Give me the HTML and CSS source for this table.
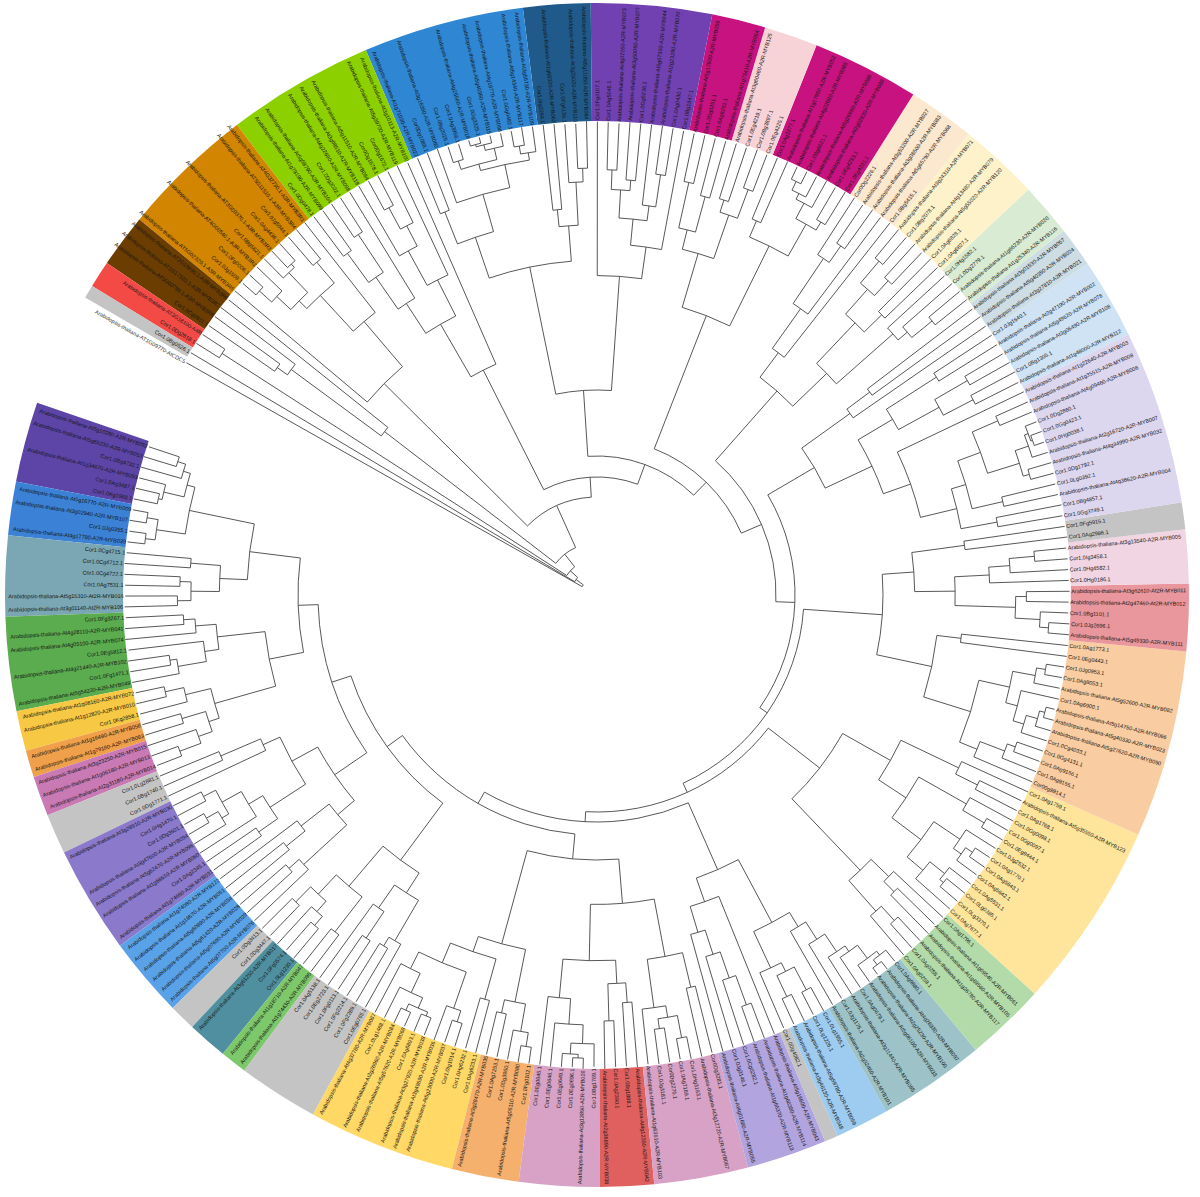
FILE: index.html
```html
<!DOCTYPE html>
<html lang="en">
<head>
<meta charset="utf-8">
<title>MYB phylogenetic tree</title>
<link rel="stylesheet" href="styles.css">
</head>
<body>
<main class="page">
  <svg id="tree" class="tree" width="1200" height="1197" viewBox="0 0 1200 1197" xmlns="http://www.w3.org/2000/svg">
    <g id="bands"></g>
    <g id="branches" class="branches"></g>
    <g id="labels" class="labels"></g>
  </svg>
</main>
<script src="script.js"></script>
</body>
</html>
```
FILE: styles.css
```css
html, body {
  margin: 0;
  padding: 0;
  background: #ffffff;
}
.page {
  width: 1200px;
  height: 1197px;
  overflow: hidden;
}
.tree {
  display: block;
}
.branches path,
.branches line {
  stroke: #3a3a3a;
  stroke-width: 0.85;
  fill: none;
}
.labels text {
  font-family: "Liberation Sans", Arial, sans-serif;
  font-size: 5.5px;
  fill: #161616;
}
.labels text.outgroup {
  fill: #333333;
}
```
FILE: script.js
```js
(function () {
  var CX = 597, CY = 595, TIP = 474, RIN = 474, ROUT = 592;
  var AP = 'Arabidopsis-thaliana-';
  var G = '#c4c4c4';
  var ranges = [
    ['#5d45a8', ['A:At5g10280-A2R-MYB092','A:At5g65230-A2R-MYB053','Cor1.0Bg4732.1','A:At1g34670-A2R-MYB093','Cor1.0Ag3487.1','Cor1.0Kg1968.1']],
    ['#3b82d6', ['A:At5g16770-A2R-MYB009','A:At3g02940-A2R-MYB107','Cor1.0Jg0355.1','A:At4g17780-A2R-MYB039']],
    ['#7aa7b3', ['Cor1.0Cg4715.1','Cor1.0Cg4712.1','Cor1.0Cg4722.1','Cor1.0Ag7531.1','A:At5g15310-At2R-MYB016','A:At3g01140-At2R-MYB106']],
    ['#5bab4f', ['Cor1.0Fg3267.1','A:At4g28110-A2R-MYB041','A:At4g05100-A2R-MYB074','Cor1.0Eg5812.1','A:At4g21440-A2R-MYB102','Cor1.0Fg1471.1','A:At5g54230-A2R-MYB049']],
    ['#f7c843', ['A:At1g08160-A2R-MYB072','A:At1g12820-A2R-MYB010','Cor1.0Kg2858.1']],
    ['#f0a04a', ['A:At1g16490-A2R-MYB058','A:At1g79180-A2R-MYB063']],
    ['#c97ab5', ['A:At3g23250-A2R-MYB015','A:At1g06180-A2R-MYB013','A:At2g31180-A2R-MYB014']],
    [G, ['Cor1.0Lg2881.1','Cor1.0Bg1740.1','Cor1.0Dg1771.1']],
    ['#8b79cc', ['A:At3g28910-A2R-MYB030','Cor1.0Hg1470.1','Cor1.0Dg3501.1','A:At3g47600-A2R-MYB094','A:At5g62470-A2R-MYB096','A:At1g68610-A2R-MYB060','Cor1.0Ag2345.1','A:At1g74650-A2R-MYB031']],
    ['#5aa2e8', ['A:At1g74080-A2R-MYB122','A:At1g18570-A2R-MYB051','A:At5g60890-A2R-MYB034','A:At5g61420-A2R-MYB028','A:At5g07690-A2R-MYB029','A:At5g07700-A2R-MYB076']],
    [G, ['Cor1.0Dg3413.1','Cor1.0Dg3447.1']],
    ['#4f8f9f', ['A:At3g61250-A2R-MYB017','Cor1.0Fg0574.1','Cor1.0Lg1230.1']],
    ['#7ec86c', ['A:At1g18710-A2R-MYB047','A:At1g74430-A2R-MYB095']],
    [G, ['Cor1.0Ag5138.1','Cor1.0Eg2723.1','Cor1.0Fg0113.1','Cor1.0Fg2214.1','Cor1.0Fg2289.1','Cor1.0Eg0765.1']],
    ['#ffd866', ['A:At4g37780-A2R-MYB087','Cor1.0Lg1468.1','A:At2g26960-A2R-MYB084','A:At5g57620-A2R-MYB068','Cor1.0Ag6893.1','A:At3g27920-A2R-MYB038','A:At3g49690-A2R-MYB036','A:At5g23000-A2R-MYB037','Cor1.0Ig1014.1','Cor1.0Hg6232.1','Cor1.0Ag6233.1']],
    ['#f5b06e', ['A:At3g28470-A2R-MYB035','Cor1.0Ag7253.1','Cor1.0Dg3960.1','A:At5g06110-A2R-MYB080','Cor1.0Fg0102.1']],
    ['#d7a2c6', ['Cor1.0Eg0645.1','Cor1.0Eg0646.1','Cor1.0Eg0649.1','Cor1.0Eg0696.1','A:At3g13890-A2R-MYB026','Cor1.0Bg1769.1']],
    ['#e0605f', ['A:At2g36890-A2R-MYB038','Cor1.0Ag2390.1','Cor1.0Bg1888.1','A:At4g12350-A2R-MYB042']],
    ['#d7a2c6', ['A:At1g63910-A2R-MYB103','Cor1.0Jg3181.1','Cor0Dg2270.1','Cor1.0Ag7169.1','Cor1.0Hg3163.1','A:At3g12720-A2R-MYB067','Cor0Dg3281.1']],
    ['#b2a4de', ['A:At4g01680-A2R-MYB055','Cor1.0Jg3146.1','Cor1.0Cg0282.1','A:At1g66370-A2R-MYB113','A:At1g66380-A2R-MYB114','A:At5g16600-A2R-MYB043']],
    [G, ['Cor1.0Dg4082.1']],
    ['#9ecbf0', ['A:At3g46130-A2R-MYB048','A:At5g59780-A2R-MYB059','Cor1.0Lg1226.1','Cor1.0Lg1955.1']],
    ['#9dc3c8', ['A:At2g32460-A2R-MYB101','Cor1.0Jg1175.1','A:At3g11440-A2R-MYB065','Cor1.0Ag0679.1','A:At5g06100-A2R-MYB033','A:At2g25230-A2R-MYB100','A:At4g26930-A2R-MYB097','Cor1.0Ag9880.1']],
    ['#b2dba9', ['Cor1.0Ag0259.1','Cor1.0Ag0258.1','A:At1g26780-A2R-MYB117','A:At1g69560-A2R-MYB105','A:At1g09540-A2R-MYB061','Cor1.0Ag1796.1']],
    ['#fee59b', ['Cor1.0Ag7677.1','Cor1.0Lg3370.1','Cor1.0Lg0385.1','Cor1.0Ag5531.1','Cor1.0Ag5642.1','Cor1.0Ag5643.1','Cor1.0Ag1770.1','Cor1.0Jg2532.1','Cor1.0Eg9444.1','Cor1.0Gg0097.1','Cor1.0Gg0098.1','Cor1.0Ag1768.1','A:At5g35550-A2R-MYB123','Cor1.0Ag1759.1']],
    ['#f9cda1', ['Cor00g9914.1','Cor1.0Ag9155.1','Cor1.0Ag9156.1','Cor1.0Gg4131.1','Cor1.0Cg4033.1','A:At5g27620-A2R-MYB090','A:At5g40330-A2R-MYB023','A:At5g14750-A2R-MYB066','Cor1.0Ag6900.1','A:At5g52600-A2R-MYB082','Cor1.0Ag8053.1','Cor1.0Jg0953.1','Cor1.0Eg0443.1','Cor1.0Ag1773.1']],
    ['#e9969d', ['A:At5g49330-A2R-MYB111','Cor1.0Jg2696.1','Cor1.0Bg1101.1','A:At2g47460-At2R-MYB012','A:At3g62610-At2R-MYB011']],
    ['#f2d5e2', ['Cor1.0Hg0186.1','Cor1.0Hg4582.1','Cor1.0Ig3458.1','A:At3g13540-A2R-MYB005']],
    [G, ['Cor1.0Ag2986.1','Cor1.0Fg5915.1']],
    ['#ddd6ef', ['Cor1.0Gg3749.1','Cor1.0Bg4857.1','A:At4g38620-A2R-MYB004','Cor1.0Lg0392.1','Cor1.0Dg1792.1','A:At4g34990-A2R-MYB032','A:At2g16720-A2R-MYB007','Cor1.0Hg0038.1','Cor1.0Gg0423.1','Cor1.0Dg2860.1','A:At4g09460-A2R-MYB006','A:At1g35515-A2R-MYB008','A:At1g22640-A2R-MYB003']],
    ['#cfe3f5', ['A:At1g48000-A2R-MYB112','Cor1.0Bg1305.1','A:At3g06490-A2R-MYB108','A:At5g49620-A2R-MYB078','A:At2g47190-A2R-MYB002','Cor1.0Jg1640.1']],
    ['#cddde3', ['A:At3g27810-A2R-MYB021','A:At5g40350-A2R-MYB024','A:At3g01530-A2R-MYB057']],
    ['#d9ecd3', ['A:At1g25340-A2R-MYB116','A:At1g66230-A2R-MYB020','Cor1.0Dg2779.1','Cor1.0Hg1582.1']],
    ['#fdf2c9', ['Cor1.0Ag6827.1','Cor1.0Ag6828.1','A:At5g55020-A2R-MYB120','A:At4g13480-A2R-MYB079','Cor1.0Bg2078.1','A:At3g24310-A2R-MYB071']],
    ['#fce7cf', ['Cor1.0Bg5415.1','A:At5g65790-A2R-MYB068','A:At3g08500-A2R-MYB083','A:At3g53200-A2R-MYB027','Cor0Dg2226.1']],
    ['#c8127f', ['Cor1.0Eg4231.1','Cor1.0Eg4233.1','A:At2g02820-A2R-MYB088','A:At5g26660-A2R-MYB086','Cor1.0Bg6021.1','A:At4g22680-A2R-MYB085','A:At1g17950-A2R-MYB052','Cor1.0Ag2277.1']],
    ['#f7d3d8', ['Cor1.0Eg4225.1','Cor1.0Bg3897.1','Cor1.0Eg4219.1','A:At3g60460-A2R-MYB125']],
    ['#c8127f', ['A:At1g73410-A2R-MYB054','Cor1.0Ag6251.1','Cor1.0Dg0251.1','A:At5g17800-A2R-MYB056']],
    ['#7141b2', ['Cor1.0Bg1947.1','Cor1.0Ag0430.1','A:At2g23290-A2R-MYB070','A:At5g67300-A2R-MYB044','Cor1.0Gg5236.1','A:At3g50060-A2R-MYB077','A:At4g37260-A2R-MYB073','Cor1.0Ag5045.1','Cor1.0Fg4107.1']],
    ['#1f5a8b', ['A:At5g11050-A2R-MYB064','A:At3g29020-A2R-MYB110','Cor1.0Fg4136.1','A:At1g68320-A2R-MYB062','Cor1.0Ig2284.1']],
    ['#2f86d3', ['A:At3g55730-A2R-MYB109','A:At5g14340-A2R-MYB117','Cor1.0Gg0482.1','A:At4g18770-A2R-MYB098','A:At5g40360-A2R-MYB115','Cor1.0Gg3325.1','A:At4g25560-A2R-MYB018','Cor1.0Ag3956.1','Cor1.0Bg2026.1','A:At3g16350-A2R-MYB060','Cor0Dg1088.1','A:At1g71030-A2R-MYB022']],
    ['#8dd000', ['A:At3g10113-A2R-MYB100','A:At5g39700-A2R-MYB119','Cor0Dg1672.1','Cor0Dg1678.1','A:At5g11510-A2R-MYB064','A:At3g08510-A2R-MYB118','A:At4g22690-A2R-MYB098','Cor1.0Dg2022.1','A:At5g59790-A2R-MYB104','A:At1g79190-A2R-MYB099','Cor1.0Dg0478.1']],
    ['#d18500', ['A:AT4G32730.1-A3R-MYB3R1','A:AT5G11510.1-A3R-MYB3R4','Cor1.0Jg5044.1','Cor1.0Ag4436.1','A:AT3G09370.1-A3R-MYB3R3','Cor1.0Bg5621.1','A:AT4G00540.1-A3R-MYB3R2','Cor1.0Fg0006.1','Cor1.0Jg1509.1','A:AT5G02320.1-A3R-MYB3R5']],
    ['#6b3d00', ['A:AT2G15690.1-A3R-MYB3R6','A:AT1G17520.1-A3R-MYB3R7','A:AT5G03780.1-A3R-MYB3R8','Cor1.0Cg0911.1']],
    ['#f34a46', ['A:AT3G18100-A4R','Cor1.0Dg2818.1']],
    [G, ['Cor1.0Bg0526.1']],
    [null, ['A:AT1G09770-AtCDC5']]
  ];

  var seed = 20240611;
  function rnd() {
    seed |= 0; seed = seed + 0x6D2B79F5 | 0;
    var t = Math.imul(seed ^ seed >>> 15, 1 | seed);
    t = t + Math.imul(t ^ t >>> 7, 61 | t) ^ t;
    return ((t ^ t >>> 14) >>> 0) / 4294967296;
  }

  var leaves = [], rs = [], re = [];
  ranges.forEach(function (rg, ri) {
    rs[ri] = leaves.length;
    rg[1].forEach(function (n) {
      leaves.push({ name: n.indexOf('A:') === 0 ? AP + n.slice(2) : n, ri: ri });
    });
    re[ri] = leaves.length;
  });
  var N = leaves.length;
  var A0 = 558.3, A1 = 209.5;
  var s = (A0 - A1) / (N - 1);
  leaves.forEach(function (l, i) {
    l.ang = A0 - i * s;
    l.r = TIP - rnd() * 2.5;
  });

  function rad(a) { return a * Math.PI / 180; }
  function px(r, a) { return (CX + r * Math.cos(rad(a))).toFixed(2); }
  function py(r, a) { return (CY + r * Math.sin(rad(a))).toFixed(2); }

  function leafNode(i) { return { leaf: i, ang: leaves[i].ang, r: leaves[i].r }; }
  function mk(r, ch) { return { r: r, ch: ch, ang: (ch[0].ang + ch[1].ang) / 2 }; }
  function build(lo, hi, r) {
    if (hi - lo === 1) return leafNode(lo);
    var bounds = [];
    for (var k = lo + 1; k < hi; k++) if (leaves[k].ri !== leaves[k - 1].ri) bounds.push(k);
    var sp;
    if (bounds.length) sp = bounds[Math.floor(rnd() * bounds.length)];
    else sp = lo + 1 + Math.floor(rnd() * (hi - lo - 1));
    return mk(r, [sub(lo, sp, r), sub(sp, hi, r)]);
  }
  function sub(lo, hi, rp) {
    if (hi - lo === 1) return leafNode(lo);
    var u = 0.14 + 0.42 * rnd();
    var r = rp + (TIP - 5 - rp) * u;
    return build(lo, hi, r);
  }
  function clade(a, b, rc) {
    var lo = rs[a - 1], hi = re[b - 1];
    if (hi - lo === 1) return leafNode(lo);
    return build(lo, hi, rc);
  }

  var groups = [
    [47, 47, 17, 0], [46, 46, 26, 0], [45, 45, 36, 446], [44, 44, 52, 268],
    [43, 43, 98, 300], [42, 42, 118, 252], [39, 41, 139, 205], [36, 38, 157, 300],
    [33, 35, 179, 272], [30, 32, 198, 252], [26, 29, 207, 286], [24, 25, 217, 282],
    [20, 23, 227, 300], [15, 19, 240, 265], [11, 14, 259, 330], [8, 10, 279, 318]
  ];
  var cur = mk(299, [clade(4, 7, 334), clade(1, 3, 350)]);
  for (var g = groups.length - 1; g >= 0; g--) {
    var gr = groups[g];
    cur = mk(gr[2], [clade(gr[0], gr[1], gr[3]), cur]);
  }
  var root = cur;

  var NS = 'http://www.w3.org/2000/svg';
  var bandsG = document.getElementById('bands');
  var brG = document.getElementById('branches');
  var lbG = document.getElementById('labels');

  // bands
  ranges.forEach(function (rg, ri) {
    if (!rg[0]) return;
    var b1 = leaves[re[ri] - 1].ang - s / 2;
    var b2 = leaves[rs[ri]].ang + s / 2;
    var large = (b2 - b1) > 180 ? 1 : 0;
    var d = 'M' + px(RIN, b1) + ' ' + py(RIN, b1) +
      'L' + px(ROUT, b1) + ' ' + py(ROUT, b1) +
      'A' + ROUT + ' ' + ROUT + ' 0 ' + large + ' 1 ' + px(ROUT, b2) + ' ' + py(ROUT, b2) +
      'L' + px(RIN, b2) + ' ' + py(RIN, b2) +
      'A' + RIN + ' ' + RIN + ' 0 ' + large + ' 0 ' + px(RIN, b1) + ' ' + py(RIN, b1) + 'Z';
    var p = document.createElementNS(NS, 'path');
    p.setAttribute('d', d);
    p.setAttribute('fill', rg[0]);
    bandsG.appendChild(p);
  });

  // branches
  var parts = [];
  function draw(n) {
    if (n.leaf !== undefined) return;
    var a1 = Math.min(n.ch[0].ang, n.ch[1].ang), a2 = Math.max(n.ch[0].ang, n.ch[1].ang);
    var large = (a2 - a1) > 180 ? 1 : 0;
    parts.push('M' + px(n.r, a1) + ' ' + py(n.r, a1) + 'A' + n.r.toFixed(2) + ' ' + n.r.toFixed(2) + ' 0 ' + large + ' 1 ' + px(n.r, a2) + ' ' + py(n.r, a2));
    n.ch.forEach(function (c) {
      parts.push('M' + px(n.r, c.ang) + ' ' + py(n.r, c.ang) + 'L' + px(c.r, c.ang) + ' ' + py(c.r, c.ang));
      draw(c);
    });
  }
  draw(root);
  var bp = document.createElementNS(NS, 'path');
  bp.setAttribute('d', parts.join(''));
  brG.appendChild(bp);

  // labels
  leaves.forEach(function (l, i) {
    var t = document.createElementNS(NS, 'text');
    var rl = l.r + 1.6;
    var th = ((l.ang % 360) + 360) % 360;
    var x = px(rl, l.ang), y = py(rl, l.ang);
    var rot = th, anchor = 'start';
    if (th > 90 && th < 270) { rot = th - 180; anchor = 'end'; }
    t.setAttribute('x', x);
    t.setAttribute('y', y);
    t.setAttribute('dy', '0.35em');
    t.setAttribute('text-anchor', anchor);
    t.setAttribute('transform', 'rotate(' + rot.toFixed(2) + ' ' + x + ' ' + y + ')');
    if (!ranges[l.ri][0]) t.setAttribute('class', 'outgroup');
    t.textContent = l.name;
    lbG.appendChild(t);
  });
})();
```
